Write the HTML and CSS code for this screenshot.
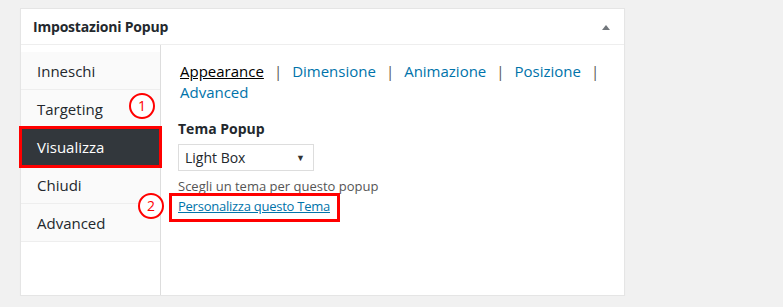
FILE: index.html
```html
<!DOCTYPE html>
<html lang="it">
<head>
    <meta charset="UTF-8">
    <meta name="viewport" content="width=device-width, initial-scale=1.0">
    <title>Impostazioni Popup</title>
    <link rel="stylesheet" href="styles.css">
</head>
<body>
    <div class="postbox">
        <div class="postbox-header">
            <h2>Impostazioni Popup</h2>
            <span class="toggle-arrow"></span>
        </div>
        <div class="postbox-inside">
            <ul class="tabs">
                <li>Inneschi</li>
                <li>Targeting</li>
                <li class="active">Visualizza</li>
                <li>Chiudi</li>
                <li>Advanced</li>
            </ul>
            <div class="tab-content">
                <div class="subtabs">
                    <a class="current">Appearance</a><span class="sep">|</span><a>Dimensione</a><span class="sep">|</span><a>Animazione</a><span class="sep">|</span><a>Posizione</a><span class="sep">|</span> <a>Advanced</a>
                </div>
                <div class="field">
                    <label for="theme">Tema Popup</label>
                    <div class="select-box">
                        <span>Light Box</span>
                        <span class="select-arrow">▼</span>
                    </div>
                    <p class="desc">Scegli un tema per questo popup</p>
                    <a class="customize">Personalizza questo Tema</a>
                </div>
            </div>
            <span class="marker marker-1">1</span>
            <span class="marker marker-2">2</span>
        </div>
    </div>
</body>
</html>
```

FILE: styles.css
```css
body {
    margin: 0;
    padding: 8px 0 0 20px;
    background-color: #f1f1f1;
    font-family: "Open Sans", sans-serif;
    color: #23282d;
}
.postbox {
    width: 603px;
    height: 286px;
    background-color: #fff;
    border: 1px solid #e5e5e5;
    box-shadow: 0 1px 1px rgba(0, 0, 0, 0.04);
    display: flex;
    flex-direction: column;
}
.postbox-header {
    height: 35px;
    border-bottom: 1px solid #eee;
    display: flex;
    align-items: center;
    justify-content: space-between;
    padding: 0 14px 0 12px;
}
.postbox-header h2 {
    margin: 0;
    font-size: 14px;
    font-weight: bold;
    letter-spacing: -0.2px;
}
.toggle-arrow {
    width: 0;
    height: 0;
    border-left: 4px solid transparent;
    border-right: 4px solid transparent;
    border-bottom: 5px solid #72777c;
    margin-top: 2px;
}
.postbox-inside {
    flex: 1;
    display: flex;
    position: relative;
}
.tabs {
    list-style: none;
    margin: 0;
    padding: 7px 0 0;
    width: 139px;
    flex-shrink: 0;
    border-right: 1px solid #ddd;
}
.tabs li {
    height: 37px;
    line-height: 38px;
    padding-left: 16px;
    background-color: #fafafa;
    border-bottom: 1px solid #eee;
    font-size: 15px;
}
.tabs li.active {
    background-color: #32373c;
    color: #fff;
    outline: 3px solid #f00;
    outline-offset: -1px;
    position: relative;
}
.tab-content {
    flex: 1;
    padding: 16px 20px 0 19px;
}
.subtabs {
    font-size: 15px;
    line-height: 21px;
}
.subtabs a {
    color: #0073aa;
}
.subtabs a.current {
    color: #000;
    text-decoration: underline;
}
.sep {
    color: #555;
    margin: 0 10px;
}
.field {
    margin-top: 16px;
    margin-left: -2px;
}
.field label {
    display: block;
    font-size: 14px;
    font-weight: bold;
    margin-bottom: 6px;
}
.select-box {
    height: 25px;
    border: 1px solid #ddd;
    display: flex;
    align-items: center;
    justify-content: space-between;
    padding: 0 8px 0 6px;
    width: 120px;
    font-size: 14px;
}
.select-arrow {
    font-size: 9px;
    color: #333;
}
.desc {
    margin: 7px 0 0;
    font-size: 13px;
    color: #555;
    line-height: 16px;
}
.customize {
    display: inline-block;
    position: relative;
    font-size: 13px;
    letter-spacing: -0.25px;
    color: #0073aa;
    text-decoration: underline;
    line-height: 18px;
    margin-top: 0;
}
.customize::after {
    content: "";
    position: absolute;
    left: -9px;
    right: -10px;
    top: -4px;
    bottom: -7px;
    border: 3px solid #f00;
}
.marker {
    position: absolute;
    width: 22px;
    height: 22px;
    border: 2px solid #f00;
    border-radius: 50%;
    color: #f00;
    font-size: 14px;
    line-height: 22px;
    text-align: center;
    background-color: #fff;
}
.marker-1 {
    left: 108px;
    top: 48px;
}
.marker-2 {
    left: 117px;
    top: 148px;
}
```
